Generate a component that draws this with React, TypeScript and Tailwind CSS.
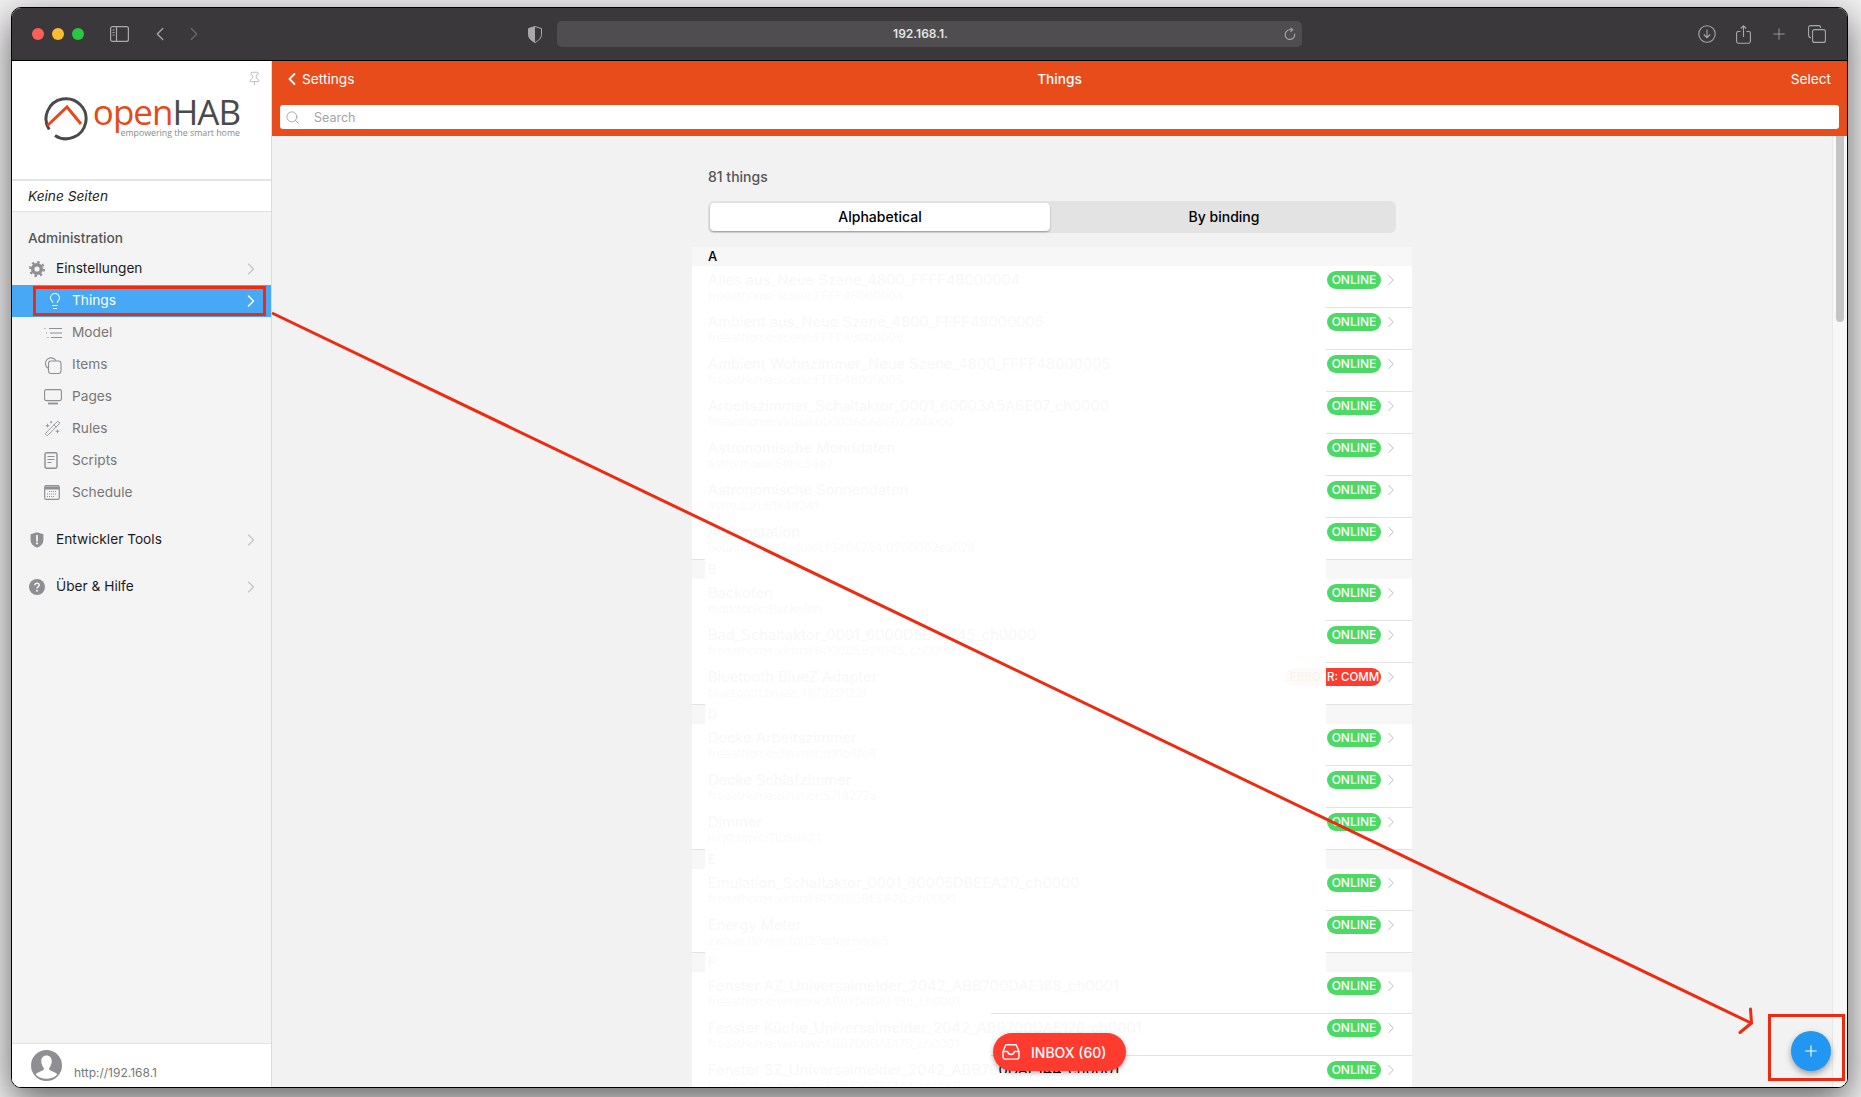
import { ChevronLeft, ChevronRight, Lightbulb, Pin, Plus, Search, WandSparkles } from "lucide-react";

type Thing = { title: string; sub: string; tail?: string; error?: boolean };
type Section = { letter: string; things: Thing[] };

const sections: Section[] = [
  {
    letter: "A",
    things: [
      { title: "Alles aus_Neue Szene_4800_FFFF48000004", sub: "freeathome:scene:FFFF48000004" },
      { title: "Ambient aus_Neue Szene_4800_FFFF48000006", sub: "freeathome:scene:FFFF48000006" },
      { title: "Ambient Wohnzimmer_Neue Szene_4800_FFFF48000005", sub: "freeathome:scene:FFFF48000005" },
      { title: "Arbeitszimmer_Schaltaktor_0001_60003A5A6E07_ch0000", sub: "freeathome:virtual:60003A5A6E07_ch0000" },
      { title: "Astronomische Monddaten", sub: "astro:moon:5ebc54e2" },
      { title: "Astronomische Sonnendaten", sub: "astro:sun:61848241" },
      { title: "Außenstation", sub: "netatmo:NAModule1:f3464284:0200002ea028" },
    ],
  },
  {
    letter: "B",
    things: [
      { title: "Backofen", sub: "mqtt:topic:Backofen" },
      { title: "Bad_Schaltaktor_0001_6000D5B2B145_ch0000", sub: "freeathome:virtual:6000D5B2B145_ch0000" },
      { title: "Bluetooth BlueZ Adapter", sub: "bluetooth:bluez:487920122f", error: true },
    ],
  },
  {
    letter: "D",
    things: [
      { title: "Decke Arbeitszimmer", sub: "freeathome:dimmer:d91b8fe6" },
      { title: "Decke Schlafzimmer", sub: "freeathome:dimmer:57f8277a" },
      { title: "Dimmer", sub: "mqtt:topic:11098821" },
    ],
  },
  {
    letter: "E",
    things: [
      { title: "Emulation_Schaltaktor_0001_60005DBEEA20_ch0000", sub: "freeathome:virtual:60005DBEEA20_ch0000" },
      { title: "Energy Meter", sub: "zwave:device:fdd27edee:node5" },
    ],
  },
  {
    letter: "F",
    things: [
      { title: "Fenster AZ_Universalmelder_2042_ABB700DAE188_ch0001", sub: "freeathome:window:ABB700DAE188_ch0001" },
      { title: "Fenster Küche_Universalmelder_2042_ABB700DAE176_ch0001", sub: "freeathome:window:ABB700DAE176_ch0001" },
      { title: "Fenster SZ_Universalmelder_2042_ABB70", tail: "0DAE144_ch0001", sub: "freeathome:window:ABB700DAE144_ch0001" },
    ],
  },
];

const subItems = [
  { label: "Model", icon: <ModelIcon /> },
  { label: "Items", icon: <ItemsIcon /> },
  { label: "Pages", icon: <PagesIcon /> },
  { label: "Rules", icon: <WandSparkles size={17} strokeWidth={1.2} /> },
  { label: "Scripts", icon: <ScriptsIcon /> },
  { label: "Schedule", icon: <ScheduleIcon /> },
];

function ModelIcon() {
  return (
    <svg width="18" height="12" viewBox="0 0 18 12" fill="none" stroke="currentColor" strokeWidth="1.1">
      <path d="M5 1.5h13M6 6h12M7 10.5h11" />
      <path d="M0.5 1.5h2M2 6h1.5M3.5 10.5h1.5" strokeDasharray="1 1" />
    </svg>
  );
}

function ItemsIcon() {
  return (
    <svg width="18" height="18" viewBox="0 0 18 18" fill="none" stroke="currentColor" strokeWidth="1.1">
      <path d="M4 12.2A5.6 5.6 0 1 1 11.8 4.6" />
      <rect x="4.5" y="5" width="12.5" height="12.5" rx="2.5" />
    </svg>
  );
}

function PagesIcon() {
  return (
    <svg width="18" height="16" viewBox="0 0 18 16" fill="none" stroke="currentColor" strokeWidth="1.1">
      <rect x="0.6" y="0.6" width="16.8" height="11" rx="1.6" />
      <path d="M4 14.5h10" strokeWidth="1.8" />
    </svg>
  );
}

function ScriptsIcon() {
  return (
    <svg width="14" height="17" viewBox="0 0 14 17" fill="none" stroke="currentColor">
      <rect x="1" y="0.8" width="12" height="15.4" rx="1.6" strokeWidth="1.4" />
      <path d="M3.5 4.5h7M3.5 7.5h7M3.5 10.5h4" strokeWidth="1" />
    </svg>
  );
}

function ScheduleIcon() {
  return (
    <svg width="16" height="15" viewBox="0 0 16 15" fill="none" stroke="currentColor">
      <rect x="0.7" y="0.7" width="14.6" height="13.6" rx="1.6" strokeWidth="1.2" />
      <path d="M1 3h14" strokeWidth="3" />
      <path d="M5 6.5h8M3 9h10M3 11.5h8" strokeWidth="1.1" strokeDasharray="1 1" />
    </svg>
  );
}

function GearIcon() {
  return (
    <svg width="16" height="16" viewBox="0 0 16 16" fill="none" stroke="#8e8e93">
      <circle cx="8" cy="8" r="4.3" strokeWidth="3.4" />
      <circle cx="8" cy="8" r="6.8" strokeWidth="2.4" strokeDasharray="2.4 2.94" />
    </svg>
  );
}

function ShieldAlertIcon() {
  return (
    <svg width="14" height="16" viewBox="0 0 14 16">
      <path d="M7 0.3 13.4 2.2V8c0 3.8-2.8 6.2-6.4 7.7C3.4 14.2 0.6 11.8 0.6 8V2.2Z" fill="#8e8e93" />
      <path d="M7 3.6v5.2" stroke="#f4f4f4" strokeWidth="1.8" strokeLinecap="round" />
      <circle cx="7" cy="11.4" r="1.1" fill="#f4f4f4" />
    </svg>
  );
}

function HelpIcon() {
  return (
    <svg width="16" height="16" viewBox="0 0 16 16">
      <circle cx="8" cy="8" r="8" fill="#8e8e93" />
      <path d="M5.8 6.2C5.9 4.9 6.8 4.2 8 4.2c1.3 0 2.2.8 2.2 1.9 0 1.8-2.2 1.7-2.2 3.4" fill="none" stroke="#f4f4f4" strokeWidth="1.5" />
      <circle cx="8" cy="11.8" r="1" fill="#f4f4f4" />
    </svg>
  );
}

function Logo() {
  return (
    <div className="flex items-start pl-[32px] pt-[35px]">
      <svg width="46" height="46" viewBox="0 0 46 46" fill="none" strokeWidth="3">
        <path d="M5.2 33.5A20 20 0 1 1 11 39.4" stroke="#4a4a4a" />
        <path d="M3.5 29.5 23 11 37 28" stroke="#e64a19" />
      </svg>
      <div className="ml-[2px] flex w-[148px] flex-col items-end">
        <div className="mt-[-3px] whitespace-nowrap font-['Open_Sans',sans-serif] text-[35px] leading-[38px] tracking-[-1px]">
          <span className="text-[#e64a19]">open</span>
          <span className="text-[#4a4a4a]">HAB</span>
        </div>
        <div className="mt-[-4px] whitespace-nowrap font-['Open_Sans',sans-serif] text-[8.8px] leading-[12px] text-[#8a8a8a]">empowering the smart home</div>
      </div>
    </div>
  );
}

function Sidebar() {
  return (
    <aside className="flex w-[260px] shrink-0 flex-col border-r border-[#dcdcdc] bg-[#f4f4f4]">
      <div className="relative h-[120px] shrink-0 border-b-2 border-[#e4e4e4] bg-white">
        <Pin size={15} strokeWidth={1} className="absolute right-[9px] top-[10px] text-[#9a9a9a]" />
        <Logo />
      </div>
      <div className="flex h-[31px] shrink-0 items-center border-b border-[#e0e0e0] bg-white pl-[16px] text-[13.7px] italic text-[#222]">Keine Seiten</div>
      <div className="mt-[16px] pl-[16px] text-[13.7px] font-medium leading-[20px] text-[#555]">Administration</div>
      <div className="mt-[5px] flex h-[32px] items-center pb-[1px] pl-[17px] pr-[10px] text-[13.7px] text-[#1c1c1c]">
        <GearIcon />
        <span className="ml-[11px] flex-1">Einstellungen</span>
        <ChevronRight size={20} strokeWidth={1.4} className="text-[#c4c4c4]" />
      </div>
      <div className="flex h-[32px] items-center bg-[#47a8f6] pb-[1px] pl-[34px] pr-[10px] text-[13.7px] text-white">
        <Lightbulb size={18} strokeWidth={1.4} />
        <span className="ml-[8px] flex-1">Things</span>
        <ChevronRight size={20} strokeWidth={1.8} />
      </div>
      {subItems.map((item) => (
        <div key={item.label} className="flex h-[32px] items-center pb-[1px] pl-[32px] text-[13.7px] text-[#777]">
          <span className="flex w-[28px] justify-start text-[#8e8e93]">{item.icon}</span>
          <span>{item.label}</span>
        </div>
      ))}
      <div className="mt-[15px] flex h-[32px] items-center pb-[1px] pl-[18px] pr-[10px] text-[13.7px] text-[#1c1c1c]">
        <ShieldAlertIcon />
        <span className="ml-[12px] flex-1">Entwickler Tools</span>
        <ChevronRight size={20} strokeWidth={1.4} className="text-[#c4c4c4]" />
      </div>
      <div className="mt-[15px] flex h-[32px] items-center pb-[1px] pl-[17px] pr-[10px] text-[13.7px] text-[#1c1c1c]">
        <HelpIcon />
        <span className="ml-[11px] flex-1">Über &amp; Hilfe</span>
        <ChevronRight size={20} strokeWidth={1.4} className="text-[#c4c4c4]" />
      </div>
      <div className="mt-auto flex h-[44px] shrink-0 items-start border-t border-[#e4e4e4] bg-white pl-[19px] pt-[6px]">
        <svg width="31" height="31" viewBox="0 0 31 31">
          <circle cx="15.5" cy="15.5" r="15.5" fill="#8e8e93" />
          <path d="M15.5 5.5c3.6 0 5.6 2.8 5.2 6.6-.3 2.6-1.3 4.6-2.4 5.8-.6 1.6.2 2.4 2.2 3.2 2.6 1 4.6 1.8 5.8 3.3a15.5 15.5 0 0 1-21.6 0c1.2-1.5 3.2-2.3 5.8-3.3 2-.8 2.8-1.6 2.2-3.2-1.1-1.2-2.1-3.2-2.4-5.8-.4-3.8 1.6-6.6 5.2-6.6Z" fill="#fff" />
        </svg>
        <span className="ml-[12px] mt-[15px] text-[12px] leading-[16px] text-[#777]">http://192.168.1</span>
      </div>
    </aside>
  );
}

function Badge({ error }: { error?: boolean }) {
  if (error) {
    return (
      <div className="flex h-[18px] whitespace-nowrap text-[11.5px] font-medium leading-[18px]">
        <div className="w-[41px] rounded-l-[9px] bg-[#fdfaf7] pl-[5px] text-[#faf4f0]">ERRO</div>
        <div className="w-[55px] rounded-r-[9px] bg-[#ff3b30] pl-px text-white">R: COMM</div>
      </div>
    );
  }
  return <div className="flex h-[18px] w-[54px] items-center justify-center rounded-[9px] bg-[#4cd964] text-[12px] font-medium text-white">ONLINE</div>;
}

function Row({ thing, last, wide }: { thing: Thing; last: boolean; wide: boolean }) {
  return (
    <div className="flex h-[42px] flex-col bg-white">
      <div className="flex flex-1 items-start pl-[16px] pr-[12px]">
        <div className="min-w-0 flex-1 whitespace-nowrap pt-[4px]">
          <div className="text-[14.7px] leading-[20px] text-[#f8f8f8]">
            {thing.title}
            {thing.tail && <span className="inline-block text-black [clip-path:inset(0_0_7px_0)]">{thing.tail}</span>}
          </div>
          <div className="text-[12px] leading-[12px] text-[#fafafa]">{thing.sub}</div>
        </div>
        <div className="mr-[1px] mt-[5px] translate-x-[2px]">
          <Badge error={thing.error} />
        </div>
        <ChevronRight size={18} strokeWidth={1.4} className="ml-[2px] mt-[5px] text-[#c8c8cc]" />
      </div>
      {wide ? (
        <div className="ml-[299px] h-px shrink-0 bg-[#e2e2e2]" />
      ) : (
        <div className={last ? "flex h-px shrink-0 justify-between" : "flex h-px shrink-0 justify-end"}>
          {last && <div className="w-[13px] bg-[#e2e2e2]" />}
          <div className="w-[86px] bg-[#e2e2e2]" />
        </div>
      )}
    </div>
  );
}

function SectionHeader({ letter, first }: { letter: string; first: boolean }) {
  if (first) {
    return <div className="h-[19px] bg-[#f7f7f7] pl-[16px] text-[13px] font-medium leading-[19px] text-black">{letter}</div>;
  }
  return (
    <div className="flex h-[19px]">
      <div className="w-[13px] bg-[#f7f7f7]" />
      <div className="flex-1 bg-white pl-[3px] text-[13px] font-medium leading-[19px] text-[#f8f8f8]">{letter}</div>
      <div className="w-[86px] bg-[#f7f7f7]" />
    </div>
  );
}

function Header() {
  return (
    <header className="h-[75px] shrink-0 bg-[#e84c1a] text-white">
      <div className="flex h-[37px] items-center pl-[13px] pr-[16px] text-[13.7px]">
        <div className="flex w-[200px] items-center">
          <ChevronLeft size={20} strokeWidth={2.2} className="ml-[-3px]" />
          <span>Settings</span>
        </div>
        <div className="flex-1 text-center font-medium">Things</div>
        <div className="w-[197px] text-right">Select</div>
      </div>
      <div className="mx-[8px] mt-[7px] flex h-[24px] items-center rounded-[3px] bg-white pl-[5px] text-[12.5px] text-[#a3a3a3]">
        <Search size={15} strokeWidth={1.3} className="text-[#9a9a9a]" />
        <span className="ml-[14px] pt-[2px]">Search</span>
      </div>
    </header>
  );
}

function Main() {
  return (
    <main className="relative flex min-w-0 flex-1 flex-col bg-[#f2f2f2]">
      <Header />
      <div className="flex min-h-0 flex-1">
        <div className="min-w-0 flex-1 overflow-hidden">
          <div className="mx-auto w-[720px]">
            <div className="pl-[16px] pt-[31px] text-[14px] font-medium leading-[20px] text-[#555]">81 things</div>
            <div className="mx-[16px] mt-[14px] flex h-[32px] rounded-[6px] bg-[#e3e3e3] p-[2px] text-[14px] font-medium text-black">
              <div className="flex w-[340px] items-center justify-center rounded-[4px] bg-white pb-[1px] shadow-[0_1px_2px_rgba(0,0,0,0.35)]">Alphabetical</div>
              <div className="flex flex-1 items-center justify-center pb-[1px] pl-[4px]">By binding</div>
            </div>
            <div className="mt-[14px]">
              {sections.map((section, s) => (
                <div key={section.letter}>
                  <SectionHeader letter={section.letter} first={s === 0} />
                  {section.things.map((thing, i) => (
                    <Row
                      key={thing.sub}
                      thing={thing}
                      last={i === section.things.length - 1}
                      wide={section.letter === "F" && i < 2}
                    />
                  ))}
                </div>
              ))}
            </div>
          </div>
        </div>
        <div className="w-[15px] shrink-0 border-l border-[#e8e8e8] bg-[#f7f7f7] pl-[3px]">
          <div className="h-[186px] w-[8px] rounded-b-[4px] bg-[#c4c4c4]" />
        </div>
      </div>
      <button className="absolute bottom-[16px] left-[721px] flex h-[38px] w-[133px] items-center rounded-[19px] bg-[#ff3b30] pl-[9px] text-[14px] font-medium text-white shadow-[0_2px_5px_rgba(0,0,0,0.3)]">
        <svg width="18" height="16" viewBox="0 0 18 16" fill="none" stroke="currentColor" strokeWidth="1.4" strokeLinejoin="round">
          <path d="M1 7.5 3.5 1.5a1 1 0 0 1 1-.7h9a1 1 0 0 1 1 .7L17 7.5v5.2a2.4 2.4 0 0 1-2.4 2.4H3.4A2.4 2.4 0 0 1 1 12.7Z" />
          <path d="M1 7.5h4.6c.5 2 1.7 3 3.4 3s2.9-1 3.4-3H17" />
        </svg>
        <span className="ml-[11px]">INBOX (60)</span>
      </button>
      <button className="absolute bottom-[16px] right-[16px] flex h-[40px] w-[40px] items-center justify-center rounded-full bg-[#2196f3] text-white shadow-[0_3px_6px_rgba(0,0,0,0.35)]">
        <Plus size={18} strokeWidth={1.5} />
      </button>
    </main>
  );
}

function TitleBar() {
  return (
    <div className="flex h-[53px] shrink-0 items-center border-b border-black bg-[#3a383b] pl-[20px] text-[#a9a8aa]">
      <span className="h-[12px] w-[12px] rounded-full bg-[#ff5f57]" />
      <span className="ml-[8px] h-[12px] w-[12px] rounded-full bg-[#febc2e]" />
      <span className="ml-[8px] h-[12px] w-[12px] rounded-full bg-[#28c840]" />
      <svg className="ml-[26px]" width="19" height="16" viewBox="0 0 19 16" fill="none" stroke="currentColor" strokeWidth="1.2">
        <rect x="0.6" y="0.6" width="17.8" height="14.8" rx="2" />
        <path d="M6.5 1v14" />
        <path d="M2.5 4h2M2.5 6.5h2M2.5 9h2" />
      </svg>
      <ChevronLeft className="ml-[20px]" size={22} strokeWidth={1.4} />
      <ChevronRight className="ml-[12px] text-[#6a686b]" size={22} strokeWidth={1.4} />
      <svg className="ml-[323px]" width="14" height="17" viewBox="0 0 14 17">
        <path d="M7 0.5 13.5 2.5V8.5c0 3.6-2.8 6.2-6.5 8C3.3 14.7 0.5 12.1 0.5 8.5V2.5Z" fill="none" stroke="currentColor" />
        <path d="M7 0.5 0.5 2.5V8.5c0 3.6 2.8 6.2 6.5 8Z" fill="currentColor" />
      </svg>
      <div className="ml-[15px] flex h-[26px] w-[745px] items-center rounded-[5px] bg-[#4f4d50] pr-[6px]">
        <span className="flex-1 text-center font-['Inter',sans-serif] text-[12px] font-semibold text-[#e4e4e4]">192.168.1.</span>
        <svg width="12" height="14" viewBox="0 0 12 14" fill="none" stroke="currentColor" strokeWidth="1.1">
          <path d="M10.6 6.6A4.8 4.8 0 1 1 6 2.8H8" />
          <path d="M6.5 0.8 8.6 2.8 6.5 4.8" />
        </svg>
      </div>
      <svg className="ml-[396px]" width="18" height="18" viewBox="0 0 18 18" fill="none" stroke="currentColor" strokeWidth="1.1">
        <circle cx="9" cy="9" r="8.2" />
        <path d="M9 4.5v8M5.8 9.5 9 12.7l3.2-3.2" />
      </svg>
      <svg className="ml-[20px]" width="15" height="19" viewBox="0 0 15 19" fill="none" stroke="currentColor" strokeWidth="1.1">
        <path d="M4.5 6.5H2.2A1.6 1.6 0 0 0 .6 8.1v8.5a1.6 1.6 0 0 0 1.6 1.6h10.6a1.6 1.6 0 0 0 1.6-1.6V8.1a1.6 1.6 0 0 0-1.6-1.6h-2.3" />
        <path d="M7.5 12V1M4.8 3.5 7.5.8l2.7 2.7" />
      </svg>
      <Plus className="ml-[19px]" size={18} strokeWidth={1.1} />
      <svg className="ml-[20px]" width="18" height="18" viewBox="0 0 18 18" fill="none" stroke="currentColor" strokeWidth="1.1">
        <path d="M3 12.6H2.6A2 2 0 0 1 .6 10.6V2.6a2 2 0 0 1 2-2h8a2 2 0 0 1 2 2V3" />
        <rect x="4.6" y="4.6" width="12.8" height="12.8" rx="2" />
      </svg>
    </div>
  );
}

function Annotations() {
  return (
    <svg className="pointer-events-none absolute left-0 top-0" width="1861" height="1097" viewBox="0 0 1861 1097" fill="none" stroke="#ee2a10" strokeWidth="3">
      <rect x="34.5" y="287.5" width="230" height="27" />
      <path d="M272 313 1751 1023" />
      <path d="M1750.5 1009 1751.5 1023 1740 1032.5" strokeLinecap="round" />
      <rect x="1769.5" y="1015.5" width="74" height="64" />
    </svg>
  );
}

export default function App() {
  return (
    <div className="relative h-[1097px] w-[1861px] overflow-hidden bg-[#f1f1f1] pl-[11px] pt-[7px] font-['Inter',sans-serif]">
      <div className="flex h-[1081px] w-[1837px] flex-col overflow-hidden rounded-[10px] border border-black bg-white shadow-[0_12px_36px_rgba(0,0,0,0.6)]">
        <TitleBar />
        <div className="flex min-h-0 flex-1">
          <Sidebar />
          <Main />
        </div>
      </div>
      <Annotations />
    </div>
  );
}
